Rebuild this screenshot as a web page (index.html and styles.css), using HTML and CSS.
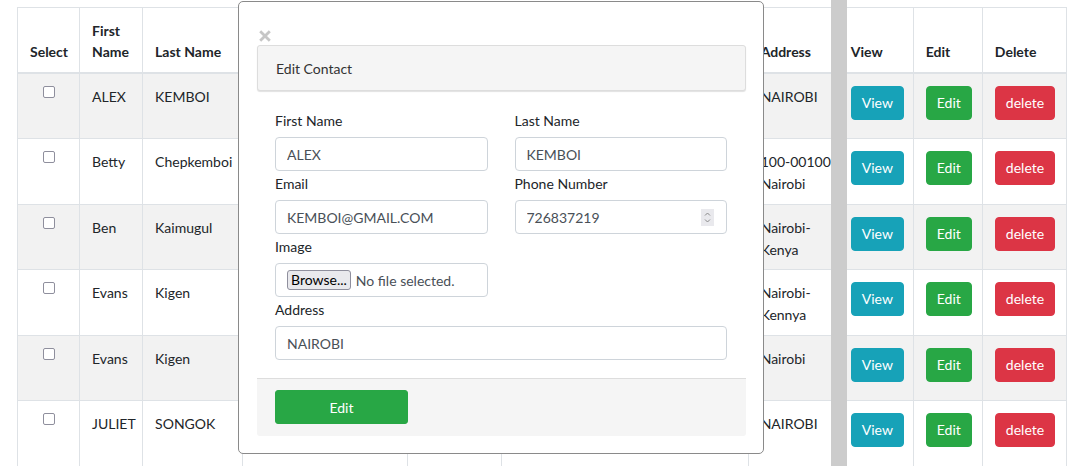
FILE: index.html
```html
<!DOCTYPE html>
<html lang="en">
<head>
<meta charset="utf-8">
<title>Contacts</title>
<link rel="stylesheet" href="styles.css">
</head>
<body>
<div class="page">
  <table class="contacts">
    <colgroup>
      <col class="c-select"><col class="c-first"><col class="c-last"><col class="c-email"><col class="c-phone"><col class="c-image"><col class="c-address"><col class="c-view"><col class="c-edit"><col class="c-delete">
    </colgroup>
    <thead>
      <tr>
        <th>Select</th><th>First Name</th><th>Last Name</th><th></th><th></th><th></th><th>Address</th><th>View</th><th>Edit</th><th>Delete</th>
      </tr>
    </thead>
    <tbody>
      <tr>
        <td class="center"><input type="checkbox" class="check"></td><td>ALEX</td><td>KEMBOI</td><td></td><td></td><td></td><td>NAIROBI</td>
        <td><button class="btn btn-view">View</button></td><td><button class="btn btn-edit">Edit</button></td><td><button class="btn btn-delete">delete</button></td>
      </tr>
      <tr>
        <td class="center"><input type="checkbox" class="check"></td><td>Betty</td><td>Chepkemboi</td><td></td><td></td><td></td><td><span class="nw">100-00100</span> Nairobi</td>
        <td><button class="btn btn-view">View</button></td><td><button class="btn btn-edit">Edit</button></td><td><button class="btn btn-delete">delete</button></td>
      </tr>
      <tr>
        <td class="center"><input type="checkbox" class="check"></td><td>Ben</td><td>Kaimugul</td><td></td><td></td><td></td><td>Nairobi-Kenya</td>
        <td><button class="btn btn-view">View</button></td><td><button class="btn btn-edit">Edit</button></td><td><button class="btn btn-delete">delete</button></td>
      </tr>
      <tr>
        <td class="center"><input type="checkbox" class="check"></td><td>Evans</td><td>Kigen</td><td></td><td></td><td></td><td>Nairobi-Kennya</td>
        <td><button class="btn btn-view">View</button></td><td><button class="btn btn-edit">Edit</button></td><td><button class="btn btn-delete">delete</button></td>
      </tr>
      <tr>
        <td class="center"><input type="checkbox" class="check"></td><td>Evans</td><td>Kigen</td><td></td><td></td><td></td><td>Nairobi</td>
        <td><button class="btn btn-view">View</button></td><td><button class="btn btn-edit">Edit</button></td><td><button class="btn btn-delete">delete</button></td>
      </tr>
      <tr>
        <td class="center"><input type="checkbox" class="check"></td><td>JULIET</td><td>SONGOK</td><td></td><td></td><td></td><td>NAIROBI</td>
        <td><button class="btn btn-view">View</button></td><td><button class="btn btn-edit">Edit</button></td><td><button class="btn btn-delete">delete</button></td>
      </tr>
    </tbody>
  </table>

  <div class="scrollbar"></div>

  <div class="modal">
    <div class="close-row">
      <svg class="close" width="12" height="12" viewBox="0 0 12 12" aria-label="close"><path d="M1.2 1.2 L10.8 10.8 M10.8 1.2 L1.2 10.8" stroke="#c6c6c6" stroke-width="2.8" stroke-linecap="butt"/></svg>
    </div>
    <div class="modal-header">Edit Contact</div>
    <form class="modal-body">
      <div class="grid">
        <div class="group">
          <label class="label">First Name</label>
          <input class="input" type="text" value="ALEX">
        </div>
        <div class="group">
          <label class="label">Last Name</label>
          <input class="input" type="text" value="KEMBOI">
        </div>
        <div class="group">
          <label class="label">Email</label>
          <input class="input" type="text" value="KEMBOI@GMAIL.COM">
        </div>
        <div class="group">
          <label class="label">Phone Number</label>
          <div class="input number">
            <input class="bare" type="text" value="726837219">
            <span class="spin">
              <svg width="13" height="17" viewBox="0 0 13 17"><rect width="13" height="17" fill="#e9e9ed"/><path d="M4 6.5 L6.5 4 L9 6.5" fill="none" stroke="#8a8a8a" stroke-width="1"/><path d="M4 10.5 L6.5 13 L9 10.5" fill="none" stroke="#8a8a8a" stroke-width="1"/></svg>
            </span>
          </div>
        </div>
        <div class="group">
          <label class="label">Image</label>
          <div class="input file">
            <span class="browse">Browse...</span>
            <span class="nofile">No file selected.</span>
          </div>
        </div>
        <div class="group"></div>
        <div class="group wide">
          <label class="label">Address</label>
          <input class="input" type="text" value="NAIROBI">
        </div>
      </div>
    </form>
    <div class="modal-footer">
      <button type="button" class="submit">Edit</button>
    </div>
  </div>
</div>
</body>
</html>
```

FILE: styles.css
```css
* { box-sizing: border-box; }
html, body { margin: 0; padding: 0; background: #fff; }
body {
  font-family: "Lato", "Liberation Sans", sans-serif;
  font-size: 14px;
  line-height: 21px;
  color: #212529;
  overflow: hidden;
  height: 466px;
}
.page { position: relative; padding: 7px 0 0 17px; height: 466px; overflow: hidden; }

.contacts {
  border-collapse: collapse;
  table-layout: fixed;
  width: 1050px;
}
.c-select { width: 62px; }
.c-first { width: 63px; }
.c-last { width: 100px; }
.c-email { width: 165px; }
.c-phone { width: 94px; }
.c-image { width: 246px; }
.c-address { width: 90px; }
.c-view { width: 75px; }
.c-edit { width: 69px; }
.c-delete { width: 84px; }

.contacts th, .contacts td {
  border: 1px solid #dee2e6;
  padding: 12px 12px;
  text-align: left;
  vertical-align: top;
  overflow: hidden;
}
.contacts thead tr { height: 63px; }
.contacts th {
  font-weight: 700;
  vertical-align: bottom;
  padding-bottom: 10px;
  border-bottom: 2px solid #dee2e6;
}
.contacts tbody tr { height: 65.5px; }
.contacts td { line-height: 22px; padding-bottom: 8px; }
.contacts tbody tr:nth-child(odd) td { background: #f2f2f2; }
.contacts td.center { text-align: center; }
.nw { white-space: nowrap; }

.check {
  appearance: none;
  -webkit-appearance: none;
  display: block;
  width: 12px;
  height: 12px;
  margin: 0 auto;
  border: 1px solid #8f8f9d;
  border-radius: 2px;
  background: #fff;
}

.btn {
  font-family: inherit;
  font-size: 14px;
  line-height: 20px;
  padding: 6px 10px;
  border: 1px solid transparent;
  border-radius: 4px;
  color: #fff;
  display: inline-block;
}
.btn-view { background: #17a2b8; border-color: #17a2b8; }
.btn-edit { background: #28a745; border-color: #28a745; }
.btn-delete { background: #dc3545; border-color: #dc3545; }

.scrollbar {
  position: absolute;
  left: 831px;
  top: 0;
  width: 16px;
  height: 466px;
  background: #cccccc;
}

.modal {
  position: absolute;
  left: 238px;
  top: 1px;
  width: 526px;
  height: 453px;
  background: #fff;
  border: 1px solid #8a8a8a;
  border-radius: 5px;
  padding: 0 17px 0 18px;
}
.close-row {
  height: 43px;
  padding: 28px 0 0 2px;
}
.close { display: block; }
.modal-header {
  height: 46px;
  border: 1px solid #dddddd;
  border-radius: 3px;
  background: #f5f5f5;
  box-shadow: 0 1px 1px rgba(0,0,0,0.12);
  padding: 0 18px;
  display: flex;
  align-items: center;
  color: #333;
}
.modal-body {
  padding: 19px 19px 0 18px;
  margin: 0;
}
.grid {
  display: grid;
  grid-template-columns: minmax(0, 1fr) minmax(0, 1fr);
  column-gap: 27px;
}
.group { margin-bottom: 2px; min-width: 0; }
.group.wide { grid-column: 1 / span 2; }
.label {
  display: block;
  margin-bottom: 6px;
  height: 21px;
}
.input {
  display: block;
  width: 100%;
  height: 34px;
  border: 1px solid #ced4da;
  border-radius: 4px;
  padding: 0 11px;
  font-family: inherit;
  font-size: 14px;
  color: #495057;
  background: #fff;
}
.number {
  display: flex;
  align-items: center;
  padding-right: 12px;
}
.bare {
  flex: 1;
  width: 0;
  min-width: 0;
  border: 0;
  padding: 0;
  margin: 0;
  font-family: inherit;
  font-size: 14px;
  color: #495057;
  background: transparent;
  outline: none;
}
.spin { display: flex; }
.file {
  display: flex;
  align-items: center;
  gap: 5px;
}
.browse {
  display: inline-block;
  height: 20px;
  line-height: 18px;
  padding: 0 3px;
  border: 1px solid #8f8f9d;
  border-radius: 3px;
  background: #e9e9ed;
  color: #000;
}
.nofile { color: #495057; }

.modal-footer {
  margin-top: 16px;
  height: 58px;
  background: #f5f5f5;
  border-top: 1px solid #dddddd;
  border-radius: 0 0 3px 3px;
  padding: 11px 18px 0 18px;
}
.submit {
  width: 133px;
  height: 34px;
  font-family: inherit;
  font-size: 14px;
  color: #fff;
  background: #28a745;
  border: 1px solid #28a745;
  border-radius: 3px;
}
```
